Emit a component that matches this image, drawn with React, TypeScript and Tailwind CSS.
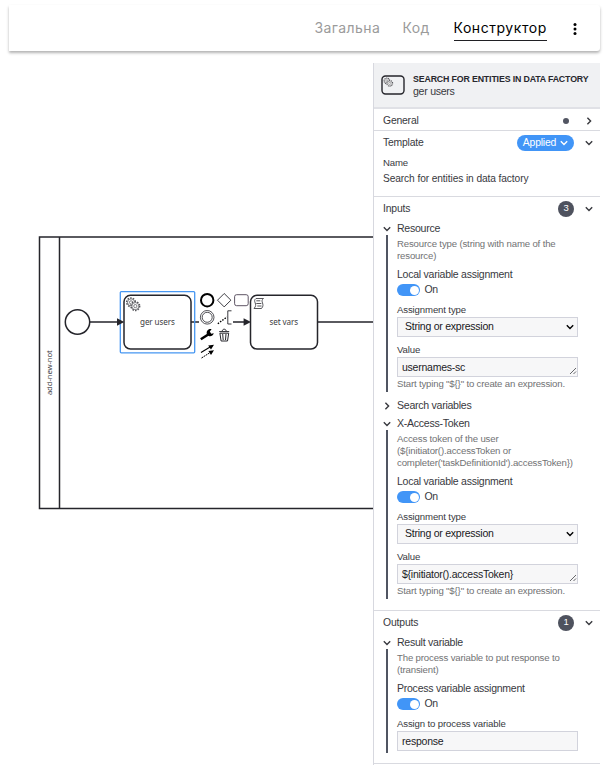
import type { ReactNode } from 'react';

function Chevron({ dir = 'down', className = '' }: { dir?: 'down' | 'right'; className?: string }) {
  return (
    <svg viewBox="0 0 8 8" className={'h-2 w-2 shrink-0 ' + className} fill="none" stroke="currentColor" strokeWidth="1.4">
      <path d={dir === 'down' ? 'M.8 2.2 4 5.4 7.2 2.2' : 'M2.4 .8 5.6 4 2.4 7.2'} />
    </svg>
  );
}

function GearShape() {
  return (
    <>
      <circle r="4" strokeWidth="1.5" strokeDasharray="1.4 1.1" />
      <circle r="3.3" fill="white" strokeWidth=".7" />
      <circle r="1.5" strokeWidth=".7" />
    </>
  );
}

function Gears() {
  return (
    <g fill="none" stroke="#55555a">
      <g transform="translate(5 5)"><GearShape /></g>
      <g transform="translate(9 8.5)"><circle r="4.4" fill="white" stroke="none" /><GearShape /></g>
    </g>
  );
}

function Toggle() {
  return (
    <div className="flex h-4 items-center text-[10.5px]">
      <span className="mr-[4.5px] flex h-[12px] w-[23px] items-center justify-end rounded-full bg-[#4195f7] pr-px">
        <span className="h-[9px] w-[9px] rounded-full bg-white" />
      </span>
      <span className="tracking-[-0.3px]">On</span>
    </div>
  );
}

function Label({ children, className = 'mt-1' }: { children: ReactNode; className?: string }) {
  return <div className={'h-[15px] text-[9.6px] leading-[15px] tracking-[-0.13px] ' + className}>{children}</div>;
}

function Select() {
  return (
    <div className="flex h-5 w-[181px] items-center justify-between border border-[#d2d3dc] bg-[#f7f7f8] pr-[3px] pl-[7px] text-[10.5px] tracking-[-0.24px] text-[#18181b]">
      String or expression
      <Chevron className="text-black" />
    </div>
  );
}

function Area({ value }: { value: string }) {
  return (
    <div className="flex h-5 w-[181px] justify-between border border-[#d2d3dc] bg-[#f7f7f8] pl-1 text-[10.5px] leading-[18px] tracking-[-0.24px] text-[#222226]">
      {value}
      <svg viewBox="0 0 8 8" className="mb-px h-2 w-2 self-end" stroke="#55565a" strokeWidth=".9">
        <path d="M1 7 7 1M4.5 7 7 4.5" />
      </svg>
    </div>
  );
}

function Entry({ title, lines, assignment, children }: {
  title: string; lines: string[]; assignment: string; children: ReactNode;
}) {
  return (
    <div>
      <div className="flex h-5 items-center pt-px pl-[9px] text-[10.6px] tracking-[-0.28px]">
        <Chevron className="mr-[6px]" />
        {title}
      </div>
      <div className="relative pb-[2px] pl-[23px]">
        <div className="absolute -top-[3px] bottom-0 left-[11.5px] w-[2px] bg-[#505562]" />
        {lines.map((l) => (
          <div key={l} className="h-3 text-[9.6px] leading-3 tracking-[-0.15px] whitespace-nowrap text-[#717274]">{l}</div>
        ))}
        <div className="mt-1 h-4 text-[10.5px] leading-4 tracking-[-0.24px]">{assignment}</div>
        <Toggle />
        {children}
      </div>
    </div>
  );
}

function Expression({ value }: { value: string }) {
  return (
    <>
      <Label>Assignment type</Label>
      <Select />
      <Label className="mt-[4.5px]">Value</Label>
      <Area value={value} />
      <div className="mt-px mb-[0.5px] h-3 text-[9.6px] leading-3 tracking-[-0.16px] whitespace-nowrap text-[#717274]">Start typing "${'{}'}" to create an expression.</div>
    </>
  );
}

function GroupHeader({ title, count }: { title: string; count: number }) {
  return (
    <div className="flex h-[21px] items-center pt-[2px] pr-[7px] pl-[9px] text-[10.4px] tracking-[-0.15px]">
      <span className="grow">{title}</span>
      <span className="mr-[11px] flex h-4 w-4 items-center justify-center rounded-full bg-[#4e525e] text-[9.5px] text-white">{count}</span>
      <Chevron />
    </div>
  );
}

function Panel() {
  return (
    <aside className="mr-[3px] h-[702px] w-[227px] shrink-0 overflow-hidden border-l border-[#d7d8df] bg-white text-[#38393e]">
      <div className="flex h-[46px] items-center border-b-2 border-[#e0e1e6] bg-[#f0f1f3] pl-[7px]">
        <svg viewBox="0 0 24 20" className="mr-2 h-5 w-6">
          <rect x="1" y="1" width="22" height="18" rx="3.5" fill="none" stroke="#25252b" strokeWidth="1.4" />
          <g transform="translate(2.3 2.3) scale(.72)"><Gears /></g>
        </svg>
        <div className="pt-px leading-[11.5px] whitespace-nowrap">
          <div className="text-[8.8px] font-bold tracking-[-0.15px] text-[#27272d]">SEARCH FOR ENTITIES IN DATA FACTORY</div>
          <div className="text-[10.6px] tracking-[-0.28px]">ger users</div>
        </div>
      </div>
      <div className="flex h-[22px] items-center border-b border-[#d9dae0] pt-[2px] pr-[7px] pl-[9px] text-[10.4px] tracking-[-0.2px]">
        <span className="grow">General</span>
        <span className="mr-[16px] h-[6px] w-[6px] rounded-full bg-[#525562]" />
        <Chevron dir="right" />
      </div>
      <div className="h-[66px] border-b border-[#d9dae0] pl-[9px]">
        <div className="flex h-[23px] items-center pt-px pr-[7px] text-[10.4px] tracking-[-0.2px]">
          <span className="grow">Template</span>
          <span className="mr-[11px] flex h-4 w-[57px] items-center justify-center gap-1 rounded-full bg-[#4195f7] text-[10.4px] text-white">
            Applied <Chevron />
          </span>
          <Chevron />
        </div>
        <div className="h-4 text-[9.6px] leading-[17px] tracking-[-0.13px]">Name</div>
        <div className="h-4 text-[10.2px] leading-[17px] tracking-[-0.1px]">Search for entities in data factory</div>
      </div>
      <div className="h-[414px] border-b border-[#d9dae0]">
        <GroupHeader title="Inputs" count={3} />
        <Entry title="Resource" lines={['Resource type (string with name of the', 'resource)']} assignment="Local variable assignment">
          <Expression value="usernames-sc" />
        </Entry>
        <div className="mt-[5px] flex h-4 items-center pt-px pl-[9px] text-[10.6px] tracking-[-0.28px]">
          <Chevron dir="right" className="mr-[6px]" />
          Search variables
        </div>
        <Entry title="X-Access-Token" lines={['Access token of the user', '(${initiator().accessToken or', "completer('taskDefinitionId').accessToken})"]} assignment="Local variable assignment">
          <Expression value="${initiator().accessToken}" />
        </Entry>
      </div>
      <div className="h-[153px] border-b border-[#d9dae0]">
        <GroupHeader title="Outputs" count={1} />
        <Entry title="Result variable" lines={['The process variable to put response to', '(transient)']} assignment="Process variable assignment">
          <Label>Assign to process variable</Label>
          <div className="h-5 w-[181px] border border-[#d2d3dc] bg-[#f7f7f8] pl-1 text-[10.5px] leading-[18px] tracking-[-0.22px] text-[#222226]">response</div>
        </Entry>
      </div>
    </aside>
  );
}

function Diagram() {
  return (
    <svg viewBox="0 63 373 702" className="h-[702px] w-[373px] shrink-0" fill="none" stroke="#25252b" strokeWidth="1.5">
      <path d="M373 237H39.5V508.5H373M59.5 237V508.5" />
      <circle cx="77.5" cy="322" r="12.2" fill="white" />
      <path d="M90 322H120M191 322H199M233 322H246M317 322H373" />
      <rect x="120.3" y="291.6" width="74.4" height="61.2" rx="1" stroke="#4797f2" strokeWidth="1.3" />
      <rect x="124" y="295.3" width="67" height="53.7" rx="6.5" fill="white" />
      <rect x="250.5" y="295.3" width="67" height="53.7" rx="6.5" fill="white" />
      <path d="M117 318.2 124.3 322 117 325.8ZM243.6 318.2 251 322 243.6 325.8Z" fill="#25252b" stroke="none" />
      <g transform="translate(125.7 297) scale(1.07)"><Gears /></g>
      <g stroke="#444449" strokeWidth=".9">
        <path d="M256 298.5H263.5C259.5 301.5 265.5 304 261.5 308.5H254C258.5 304 252 301.5 256 298.5Z" />
        <path d="M256.3 300.8H260.3M256.3 303.5H261.3M257.3 306H261.5" />
      </g>
      <g className="font-['Noto_Sans',sans-serif] tracking-[-0.1px]" fill="#3c3c42" stroke="none" fontSize="8.1" textAnchor="middle">
        <text x="157.4" y="324.7">ger users</text>
        <text x="283.8" y="324.7">set vars</text>
        <text transform="translate(52.3 372.7) rotate(-90)" fontSize="7.7">add-new-not</text>
      </g>
      <circle cx="207.2" cy="300.2" r="6.2" stroke="black" strokeWidth="2" />
      <path d="M224.2 293.5 230.9 300.2 224.2 306.9 217.5 300.2Z" strokeWidth=".9" />
      <rect x="234.6" y="294.7" width="13.6" height="11" rx="2" stroke="#4c4253" strokeWidth=".9" />
      <circle cx="207.2" cy="317.3" r="6.8" strokeWidth=".8" />
      <circle cx="207.2" cy="317.3" r="5" strokeWidth=".8" />
      <path d="M217.8 323.7 227 317" stroke="black" strokeDasharray="1.5 1.3" strokeWidth="1.4" />
      <path d="M231.5 310.8H227.8V324H231.5" strokeWidth=".9" />
      <path d="M200.8 339.2 209 334" stroke="black" strokeWidth="2.5" />
      <path d="M213.8 333.2C212.8 336.6 208.8 337.3 207 334.4 205.8 331.4 208.2 328.4 211.6 329.2L209.8 331.4 211.2 333.7Z" fill="black" stroke="none" />
      <g strokeWidth="1">
        <path d="M219.2 331.6H229.2M222.3 331C222.3 328.6 226.1 328.6 226.1 331" />
        <path d="M219.9 333.2 221.1 341H227.5L228.7 333.2ZM222.7 334 223.2 340M226 334 225.5 340" />
        <path d="M201 352.5 210.5 346.7" stroke="black" strokeWidth="1.1" />
        <path d="M201.5 358 211 352" stroke="black" strokeWidth="1" strokeDasharray="1.8 .7" />
        <path d="M214 344.8 211 349.6 208.2 345.5ZM214 350.3 211 355 208.4 350.9Z" fill="black" stroke="none" />
      </g>
    </svg>
  );
}

export default function App() {
  return (
    <div className="h-[765px] w-[603px] overflow-hidden bg-white font-['Liberation_Sans',Arial,sans-serif]">
      <div className="h-[63px] overflow-hidden pt-[5px] pr-[3px] pl-[9px]">
        <header className="flex h-[46px] items-start rounded-r-[3px] bg-white pt-[13px] pr-[23px] font-['Inter',sans-serif] text-[14px] leading-[20px] text-[#9b9b9b] shadow-[0_2px_3px_rgba(0,0,0,0.3)]">
          <nav className="flex grow justify-end">
            <span className="mr-[22px] w-[66px] tracking-[0.4px] whitespace-nowrap">Загальна</span>
            <span className="mr-[24px] w-[27px] tracking-[0.4px] whitespace-nowrap">Код</span>
            <span className="h-[23px] w-[93px] border-b-[1.5px] border-[#202024] tracking-[0.55px] whitespace-nowrap text-black">Конструктор</span>
          </nav>
          <svg viewBox="0 0 4 14" className="mt-[3.5px] ml-[26.5px] h-[14px] w-1" fill="black">
            <circle cx="2" cy="2.5" r="1.5" /><circle cx="2" cy="7" r="1.5" /><circle cx="2" cy="11.5" r="1.5" />
          </svg>
        </header>
      </div>
      <main className="flex">
        <Diagram />
        <Panel />
      </main>
    </div>
  );
}
